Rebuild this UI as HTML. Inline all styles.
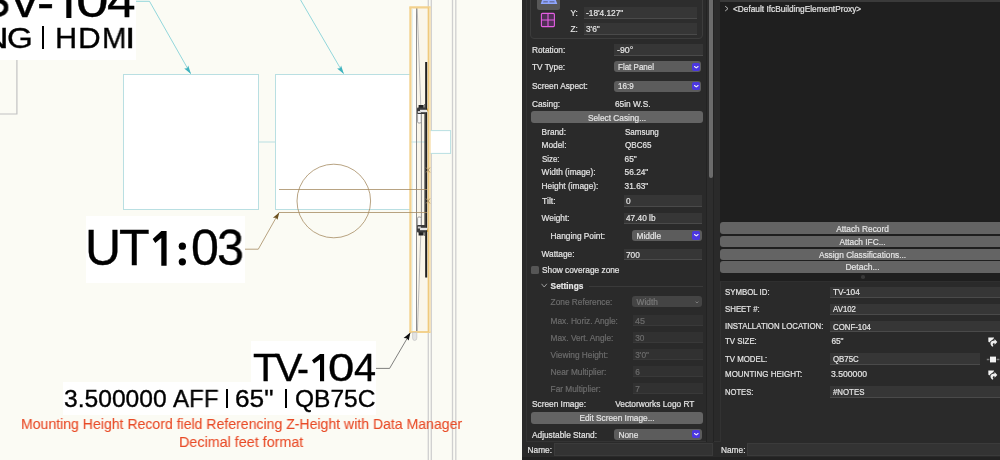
<!DOCTYPE html>
<html>
<head>
<meta charset="utf-8">
<title>TV-104</title>
<style>
html,body{margin:0;padding:0;}
body{width:1000px;height:460px;overflow:hidden;background:#fbfbf4;font-family:"Liberation Sans",sans-serif;}
#root{position:relative;width:1000px;height:460px;overflow:hidden;background:#fbfbf4;}
.abs{position:absolute;}
/* ---------- canvas ---------- */
#canvas{position:absolute;left:0;top:0;width:522px;height:460px;background:#fbfbf4;overflow:hidden;}
.wbox{position:absolute;background:#fff;}
.ctext{position:absolute;will-change:transform;color:#000;-webkit-text-stroke:0.35px #000;white-space:nowrap;line-height:1;transform-origin:0 0;}
.red{position:absolute;will-change:transform;-webkit-text-stroke:0.1px #e84a26;color:#e84a26;white-space:nowrap;line-height:1;font-size:11.2px;transform-origin:0 0;}
/* ---------- panel ---------- */
#panel{will-change:transform;position:absolute;left:522px;top:0;width:478px;height:460px;background:#2a2a2a;overflow:hidden;color:#e4e4e4;font-size:8.3px;}
.t{position:absolute;-webkit-text-stroke:0.2px currentColor;white-space:nowrap;line-height:10px;height:10px;color:#e4e4e4;font-size:8.3px;transform-origin:0 50%;}
.t.dis{color:#6c6c6c;}
.t.c{text-align:center;transform-origin:50% 50%;}
.fld{position:absolute;background:#363636;border-bottom:1px solid #4a4a4a;box-sizing:border-box;}
.fld.d{background:#313131;border-bottom-color:#393939;}
.btn{position:absolute;background:#646464;border-radius:3px;text-align:center;}
.dd{position:absolute;background:#5c5c5c;border-radius:3px;}
.dd.d{background:#444;}
.bb{position:absolute;background:#4b37e0;border-radius:2px;width:8.6px;height:8.2px;}
.bb svg{position:absolute;left:0;top:0;}
</style>
</head>
<body>
<div id="root">
<div id="canvas">
  <!-- white boxes -->
  <div class="wbox" style="left:0;top:0;width:136px;height:59.6px;"></div>
  <div class="wbox" style="left:86.1px;top:215.7px;width:158.7px;height:67px;"></div>
  <div class="wbox" style="left:251.4px;top:341px;width:125px;height:42px;"></div>
  <div class="wbox" style="left:63.2px;top:381.8px;width:313.2px;height:33.1px;"></div>

  <svg class="abs" style="left:0;top:0" width="522" height="460" viewBox="0 0 522 460">
    <!-- gray vertical line far left -->
    <path d="M16.9 60 V114 H0" fill="none" stroke="#c2c2c2" stroke-width="1.2"/>
    <!-- wall lines -->
    <g stroke="#cfcfcf" stroke-width="1.3" fill="none">
      <path d="M428.3 0 V8"/>
      <path d="M431.3 0 V460"/>
      <path d="M428.3 332 V460"/>
      <path d="M452.5 0 V460"/>
      <path d="M455.8 0 V460"/>
    </g>
    <!-- two big rectangles -->
    <g fill="#ffffff" stroke="#b9dfe2" stroke-width="1">
      <rect x="123.5" y="74.5" width="135" height="135"/>
      <rect x="275.5" y="74.5" width="135.6" height="135"/>
    </g>
    <path d="M259 142 H275" stroke="#b9dfe2" stroke-width="1" fill="none"/>
    <!-- cyan leaders -->
    <g stroke="#77cdd4" stroke-width="0.8" fill="none">
      <path d="M136 1.3 H149.5 L190.5 73.5"/>
      <path d="M300.6 0 L343.4 73.5"/>
    </g>
    <g fill="#3fb3bf">
      <path d="M191 74 L184.2 68.6 L187.2 68.2 L188.2 65.4 Z"/>
      <path d="M343.9 74 L337.1 68.6 L340.1 68.2 L341.1 65.4 Z"/>
    </g>
    <!-- TV body -->
    <rect x="411" y="8" width="18" height="324" fill="#faf6ea"/>
    <rect x="411.5" y="8" width="5" height="324" fill="#fffefa"/>
    <!-- small white rect on wall -->
    <rect x="428.6" y="130.6" width="22" height="22.8" fill="#ffffff" stroke="#b9dfe2" stroke-width="1"/>
    <path d="M411 142 H426" stroke="#bfe3e6" stroke-width="1"/>
    <!-- gray inner lines -->
    <g stroke="#8c8c8c" stroke-width="1" fill="none">
      <path d="M416.5 8 V332"/>
      <path d="M421.4 106 V234"/>
    </g>
    <g stroke="#b4b4b4" stroke-width="0.9" fill="none">
      <path d="M417.2 8 L420.8 106"/>
      <path d="M420.8 234 L417.4 332"/>
    </g>
    <path d="M412.3 9 V331" stroke="#cfe9ea" stroke-width="0.7" fill="none"/>
    <!-- black mount bar -->
    <path d="M426.1 62 V277.5" stroke="#161616" stroke-width="1.8" fill="none"/>
    <path d="M427.2 62 V277.5" stroke="#6a6a6a" stroke-width="0.5" fill="none"/>
    <path d="M424.6 104 V236" stroke="#555" stroke-width="0.8" fill="none"/>
    <!-- brackets -->
    <g>
      <rect x="417.6" y="113" width="3.6" height="10" rx="1.2" fill="#fdfdfd" stroke="#888" stroke-width="0.8"/>
      <rect x="418.6" y="105" width="5" height="4" fill="#222"/>
      <rect x="417" y="107.5" width="9" height="6.5" rx="1" fill="#3a3a3a"/>
      <rect x="420" y="109.8" width="7" height="2.4" fill="#e8e8e8"/>
      <rect x="417.8" y="111" width="3" height="2" fill="#cfcfcf"/>
      <rect x="427" y="108.5" width="2" height="2.4" fill="#b98a2c"/>
      <rect x="417.6" y="217" width="3.6" height="10" rx="1.2" fill="#fdfdfd" stroke="#888" stroke-width="0.8"/>
      <rect x="418.6" y="231.5" width="5" height="4" fill="#222"/>
      <rect x="417" y="225" width="9" height="7.5" rx="1" fill="#3a3a3a"/>
      <rect x="420" y="227.8" width="7" height="2.4" fill="#e8e8e8"/>
      <rect x="417.8" y="226.5" width="3" height="2" fill="#cfcfcf"/>
      <rect x="427" y="229.5" width="2" height="2.4" fill="#b98a2c"/>
    </g>
    <!-- orange selection outline -->
    <path d="M409.3 7.4 H430.6 M409.3 332 H430.6" stroke="#f3d28e" stroke-width="2.2" fill="none"/>
    <path d="M410.4 7.4 V332" stroke="#f3d28e" stroke-width="2.2" fill="none"/>
    <path d="M428.4 7.4 V332" stroke="#efc97c" stroke-width="1.5" fill="none"/>
    <path d="M429.9 7.4 V332" stroke="#f7dfac" stroke-width="1.6" fill="none"/>
    <!-- bottom stub -->
    <path d="M412.6 332.5 V338 Q412.6 340.5 414.6 340.5 Q416.8 340.5 416.8 338 V332.5 Z" fill="#e4e4e4" stroke="#bdbdbd" stroke-width="0.6"/>
    <!-- brown circle & lines -->
    <g stroke="#a68c62" stroke-width="0.8" fill="none">
      <circle cx="333.8" cy="201" r="36.8"/>
      <path d="M279 189.5 H427"/>
      <path d="M245 249.2 H258.3 L279 212.5 H427"/>
      <path d="M426 167.5 L430 172.5 M430 167.5 L426 172.5"/>
      <path d="M426 198.5 L430 203.5 M430 198.5 L426 203.5"/>
    </g>
    <path d="M279.3 212.6 L277.5 219.8 L275.8 217.8 L272.9 217.8 Z" fill="#6e5220"/>
    <!-- black leader to TV -->
    <path d="M376 368.4 H389.6 L410 333.5" stroke="#4a4a4a" stroke-width="0.7" fill="none"/>
    <path d="M410.4 332.6 L408.7 340.6 L406.6 338.2 L403.6 338 Z" fill="#111"/>
  </svg>

  <!-- text -->
  <!--BIG-->
  <span class="ctext g" style="left:-20.66px;top:-22.71px;font-size:47.97px;transform:scaleX(0.981)">S</span>
  <span class="ctext g" style="left:8.20px;top:-22.71px;font-size:47.97px;transform:scaleX(1.052)">V</span>
  <span class="ctext g" style="left:37.33px;top:-20.91px;font-size:47.97px;transform:scaleX(1.076)">-</span>
  <svg class="abs" style="left:0;top:0;overflow:visible" width="1" height="1"><polygon points="66.3,-15.7 71.4,-15.7 71.4,17.9 66.3,17.9 66.3,-9.0 59.2,-4.1 56.7,-8.0" fill="#000"/></svg>
  <span class="ctext g" style="left:76.06px;top:-22.71px;font-size:47.97px;transform:scaleX(1.221)">0</span>
  <span class="ctext g" style="left:106.67px;top:-22.71px;font-size:47.97px;transform:scaleX(1.071)">4</span>
  <span class="ctext g" style="left:-18.03px;top:23.40px;font-size:30.00px;transform:scaleX(1.231)">N</span>
  <span class="ctext g" style="left:6.74px;top:23.40px;font-size:30.00px;transform:scaleX(1.106)">G</span>
  <div class="abs" style="left:41.70px;top:26.02px;width:2.80px;height:23.41px;background:#000"></div>
  <span class="ctext g" style="left:54.59px;top:23.40px;font-size:30.00px;transform:scaleX(1.022)">H</span>
  <span class="ctext g" style="left:77.52px;top:23.40px;font-size:30.00px;transform:scaleX(1.047)">D</span>
  <span class="ctext g" style="left:101.89px;top:23.40px;font-size:30.00px;transform:scaleX(0.978)">M</span>
  <span class="ctext g" style="left:125.47px;top:23.40px;font-size:30.00px;transform:scaleX(1.241)">I</span>
  <span class="ctext g" style="left:85.10px;top:223.72px;font-size:49.71px;transform:scaleX(1.006)">U</span>
  <span class="ctext g" style="left:119.20px;top:223.72px;font-size:49.71px;transform:scaleX(1.009)">T</span>
  <svg class="abs" style="left:0;top:0;overflow:visible" width="1" height="1"><polygon points="161.3,231.0 166.6,231.0 166.6,265.8 161.3,265.8 161.3,238.0 155.3,243.0 152.7,239.0" fill="#000"/></svg>
  <svg class="abs" style="left:0;top:0;overflow:visible" width="1" height="1"><circle cx="182.35" cy="246.21" r="3.65" fill="#000"/><circle cx="182.35" cy="261.83" r="3.65" fill="#000"/></svg>
  <span class="ctext g" style="left:191.29px;top:223.72px;font-size:49.71px;transform:scaleX(1.010)">0</span>
  <span class="ctext g" style="left:217.16px;top:223.72px;font-size:49.71px;transform:scaleX(0.976)">3</span>
  <span class="ctext g" style="left:252.79px;top:348.29px;font-size:39.00px;transform:scaleX(1.065)">T</span>
  <span class="ctext g" style="left:275.24px;top:348.29px;font-size:39.00px;transform:scaleX(1.052)">V</span>
  <span class="ctext g" style="left:297.33px;top:348.99px;font-size:39.00px;transform:scaleX(0.914)">-</span>
  <svg class="abs" style="left:0;top:0;overflow:visible" width="1" height="1"><polygon points="320.0,354.0 324.1,354.0 324.1,381.3 320.0,381.3 320.0,359.5 314.0,363.4 312.0,360.3" fill="#000"/></svg>
  <span class="ctext g" style="left:328.31px;top:348.29px;font-size:39.00px;transform:scaleX(1.212)">0</span>
  <span class="ctext g" style="left:353.73px;top:348.29px;font-size:39.00px;transform:scaleX(1.018)">4</span>
  <span class="ctext g" style="left:63.96px;top:386.92px;font-size:24.43px;transform:scaleX(1.008)">3.500000</span>
  <span class="ctext g" style="left:172.55px;top:386.92px;font-size:24.43px;transform:scaleX(0.987)">AFF</span>
  <div class="abs" style="left:225.50px;top:389.05px;width:2.80px;height:19.07px;background:#000"></div>
  <span class="ctext g" style="left:235.39px;top:386.92px;font-size:24.43px;transform:scaleX(1.073)">65&quot;</span>
  <div class="abs" style="left:284.60px;top:389.05px;width:2.80px;height:19.07px;background:#000"></div>
  <span class="ctext g" style="left:295.12px;top:386.92px;font-size:24.43px;transform:scaleX(1.004)">QB75C</span>
  <!--/BIG-->
  <div class="red" id="r1" style="left:21px;top:415.8px;font-size:15px;transform:scaleX(0.938);">Mounting Height Record field Referencing Z-Height with Data Manager</div>
  <div class="red" id="r2" style="left:179.2px;top:433.5px;font-size:15px;transform:scaleX(0.956);">Decimal feet format</div>
</div>

<div id="panel">
  <!-- frames / backgrounds (page coords = panel coords + 522) -->
  <div class="abs" style="left:198px;top:0;width:280px;height:281px;background:#1f1f1f;"></div>
  <div class="abs" style="left:0;top:457.4px;width:478px;height:2.6px;background:#222;"></div>
  <div class="abs" style="left:4.1px;top:0;width:193.9px;height:441.9px;border-left:1px solid #333;border-bottom:1px solid #343434;box-sizing:border-box;"></div>
  <div class="abs" style="left:184.3px;top:0;width:8px;height:441.5px;background:#2d2d2d;border-left:1px solid #232323;border-right:1px solid #232323;box-sizing:border-box;"></div>
  
  <!-- scrollbar thumb -->
  <div class="abs" style="left:187px;top:-6px;width:4px;height:184px;background:#6b6b6b;border-radius:2px;"></div>

  <!-- group box -->
  <div class="abs" style="left:8px;top:-8px;width:172.6px;height:47px;border:1px solid #3c3c3c;border-radius:4px;background:#2d2d2d;box-sizing:border-box;"></div>
  <div class="abs" style="left:15px;top:-4px;width:22.6px;height:13.8px;background:#575757;border-radius:2.5px;"></div>
  <svg class="abs" style="left:18px;top:0" width="18" height="6" viewBox="0 0 18 6">
    <path d="M2.4 -1 H15.4 L17.3 3.9 H0.7 Z" fill="#8fa6ff"/>
    <path d="M3.5 1 H7.8 V2.6 H3 Z M9.5 1 H14.3 L14.8 2.6 H9.5 Z" fill="#6a74a8"/>
  </svg>
  <svg class="abs" style="left:18px;top:12px" width="16" height="16" viewBox="0 0 16 16">
    <rect x="1.4" y="1.4" width="13" height="13.2" rx="1" fill="#4f2f55" stroke="#e45ee2" stroke-width="1.1"/>
    <path d="M8 1.4 V14.6 M1.4 8 H14.4" stroke="#e45ee2" stroke-width="1.1"/>
  </svg>
  <div class="t" style="left:48.5px;top:7.6px;">Y:</div>
  <div class="fld" style="left:61.7px;top:7.1px;width:113.7px;height:11.6px;"></div>
  <div class="t" style="left:64px;top:7.7px;">-18'4.127"</div>
  <div class="t" style="left:48.5px;top:24.1px;">Z:</div>
  <div class="fld" style="left:61.7px;top:23.3px;width:113.7px;height:11.6px;"></div>
  <div class="t" style="left:64px;top:24.1px;">3'6"</div>

  <div class="t" style="left:10px;top:44.7px;">Rotation:</div>
  <div class="fld" style="left:92px;top:44px;width:88.6px;height:11.5px;"></div>
  <div class="t" style="left:95px;top:44.9px;transform:scaleX(1.06);">-90°</div>

  <div class="t" style="left:10px;top:62px;">TV Type:</div>
  <div class="dd" style="left:92px;top:61.4px;width:87.4px;height:10.8px;"></div>
  <div class="bb" style="left:169.8px;top:62.8px;"><svg width="8.6" height="8.2" viewBox="0 0 8.6 8.2"><path d="M2.5 3.5 L4.3 4.9 L6.1 3.5" fill="none" stroke="#f6f6f6" stroke-width="1.05" stroke-linecap="round" stroke-linejoin="round"/></svg></div>
  <div class="t" style="left:95.6px;top:62px;transform:scaleX(0.965);">Flat Panel</div>

  <div class="t" style="left:10px;top:81.1px;">Screen Aspect:</div>
  <div class="dd" style="left:92px;top:80.5px;width:87.4px;height:11px;"></div>
  <div class="bb" style="left:169.8px;top:82px;"><svg width="8.6" height="8.2" viewBox="0 0 8.6 8.2"><path d="M2.5 3.5 L4.3 4.9 L6.1 3.5" fill="none" stroke="#f6f6f6" stroke-width="1.05" stroke-linecap="round" stroke-linejoin="round"/></svg></div>
  <div class="t" style="left:95.6px;top:81.1px;transform:scaleX(0.966);">16:9</div>

  <div class="t" style="left:10px;top:98.6px;">Casing:</div>
  <div class="t" style="left:93px;top:98.6px;">65in W.S.</div>
  <div class="btn" style="left:8.8px;top:111.1px;width:172.2px;height:11.8px;"></div>
  <div class="t c" style="left:9px;width:172px;top:112.8px;">Select Casing...</div>

  <div class="t" style="left:19.6px;top:127px;">Brand:</div>
  <div class="t" style="left:102.6px;top:127px;transform:scaleX(0.965);">Samsung</div>
  <div class="t" style="left:19.6px;top:140.4px;">Model:</div>
  <div class="t" style="left:102.6px;top:140.4px;transform:scaleX(0.97);">QBC65</div>
  <div class="t" style="left:19.6px;top:153.6px;transform:scaleX(0.95);">Size:</div>
  <div class="t" style="left:102.6px;top:153.6px;">65"</div>
  <div class="t" style="left:19.6px;top:167.4px;">Width (image):</div>
  <div class="t" style="left:102.6px;top:167.4px;">56.24"</div>
  <div class="t" style="left:19.6px;top:180.6px;">Height (image):</div>
  <div class="t" style="left:102.6px;top:180.6px;">31.63"</div>

  <div class="t" style="left:19.6px;top:196px;transform:scaleX(1.05);">Tilt:</div>
  <div class="fld" style="left:101.5px;top:195.4px;width:78.8px;height:11.2px;"></div>
  <div class="t" style="left:104px;top:196.2px;">0</div>
  <div class="t" style="left:19.6px;top:213.4px;">Weight:</div>
  <div class="fld" style="left:101.5px;top:212.6px;width:78.8px;height:11.2px;"></div>
  <div class="t" style="left:104px;top:213.4px;">47.40 lb</div>

  <div class="t" style="left:28.6px;top:230.6px;">Hanging Point:</div>
  <div class="dd" style="left:110.1px;top:229.7px;width:69.7px;height:11.1px;"></div>
  <div class="bb" style="left:169.8px;top:231.4px;"><svg width="8.6" height="8.2" viewBox="0 0 8.6 8.2"><path d="M2.5 3.5 L4.3 4.9 L6.1 3.5" fill="none" stroke="#f6f6f6" stroke-width="1.05" stroke-linecap="round" stroke-linejoin="round"/></svg></div>
  <div class="t" style="left:114.6px;top:230.6px;">Middle</div>

  <div class="t" style="left:19.6px;top:249.4px;">Wattage:</div>
  <div class="fld" style="left:101.5px;top:249px;width:78.8px;height:11.2px;"></div>
  <div class="t" style="left:104px;top:249.6px;">700</div>

  <div class="abs" style="left:9px;top:266.1px;width:8px;height:8px;background:#565656;border-radius:1.6px;"></div>
  <div class="t" style="left:20px;top:265.4px;">Show coverage zone</div>

  <svg class="abs" style="left:19px;top:282px" width="7" height="7" viewBox="0 0 7 7"><path d="M0.5 1.8 L3.2 5 L5.9 1.8" fill="none" stroke="#b8b8b8" stroke-width="0.8"/></svg>
  <div class="t" style="left:28.6px;top:281px;font-weight:bold;">Settings</div>
  <div class="abs" style="left:67px;top:286px;width:114px;height:1px;background:#3a3a3a;"></div>

  <div class="t dis" style="left:28.6px;top:296.8px;">Zone Reference:</div>
  <div class="dd d" style="left:110px;top:296px;width:69.6px;height:11px;"></div>
  <div class="t dis" style="left:114.6px;top:296.8px;color:#7a7a7a;">Width</div>
  <svg class="abs" style="left:171.5px;top:299.5px" width="6" height="5" viewBox="0 0 6 5"><path d="M1.6 1.6 L3 3 L4.4 1.6" fill="none" stroke="#7c7c7c" stroke-width="1"/></svg>

  <div class="t dis" style="left:28.6px;top:315.6px;">Max. Horiz. Angle:</div>
  <div class="fld d" style="left:111px;top:315px;width:69.6px;height:11.4px;"></div>
  <div class="t dis" style="left:113.2px;top:315.8px;transform:scaleX(1.08);">45</div>
  <div class="t dis" style="left:28.6px;top:332.6px;">Max. Vert. Angle:</div>
  <div class="fld d" style="left:111px;top:332px;width:69.6px;height:11.4px;"></div>
  <div class="t dis" style="left:113.2px;top:332.8px;">30</div>
  <div class="t dis" style="left:28.6px;top:349.6px;">Viewing Height:</div>
  <div class="fld d" style="left:111px;top:349px;width:69.6px;height:11.4px;"></div>
  <div class="t dis" style="left:113.2px;top:349.8px;">3'0"</div>
  <div class="t dis" style="left:28.6px;top:366.5px;">Near Multiplier:</div>
  <div class="fld d" style="left:111px;top:366px;width:69.6px;height:11.4px;"></div>
  <div class="t dis" style="left:113.2px;top:366.8px;">6</div>
  <div class="t dis" style="left:28.6px;top:383.7px;">Far Multiplier:</div>
  <div class="fld d" style="left:111px;top:382.8px;width:69.6px;height:11.4px;"></div>
  <div class="t dis" style="left:113.2px;top:383.8px;">7</div>

  <div class="t" style="left:10px;top:399px;">Screen Image:</div>
  <div class="t" style="left:93.2px;top:399px;">Vectorworks Logo RT</div>
  <div class="btn" style="left:8.8px;top:412px;width:172.2px;height:11.7px;"></div>
  <div class="t c" style="left:9px;width:172px;top:413px;">Edit Screen Image...</div>

  <div class="t" style="left:10px;top:429.6px;">Adjustable Stand:</div>
  <div class="dd" style="left:92px;top:429px;width:87.6px;height:10.8px;"></div>
  <div class="bb" style="left:169.8px;top:430.3px;"><svg width="8.6" height="8.2" viewBox="0 0 8.6 8.2"><path d="M2.5 3.5 L4.3 4.9 L6.1 3.5" fill="none" stroke="#f6f6f6" stroke-width="1.05" stroke-linecap="round" stroke-linejoin="round"/></svg></div>
  <div class="t" style="left:96.5px;top:429.6px;">None</div>

  <div class="t" style="left:5.6px;top:444.8px;">Name:</div>
  <div class="fld d" style="left:32px;top:443.1px;width:158.8px;height:12.7px;background:#333;border:1px solid #3b3b3b;"></div>

  <!-- ============ right column ============ -->
  <div class="abs" style="left:198px;top:0;width:280px;height:1.6px;background:#3a3a3a;"></div>
  <svg class="abs" style="left:201.7px;top:5.4px" width="6" height="8" viewBox="0 0 6 8"><path d="M1.2 1.2 L4 3.6 L1.2 6" fill="none" stroke="#c8c8c8" stroke-width="0.9"/></svg>
  <div class="t" style="left:211px;top:4.2px;">&lt;Default IfcBuildingElementProxy&gt;</div>

  <div class="btn" style="left:198px;top:222.4px;width:285px;height:11.6px;"></div>
  <div class="t c" style="left:198px;width:285px;top:223.9px;">Attach Record</div>
  <div class="btn" style="left:198px;top:235.5px;width:285px;height:11.5px;"></div>
  <div class="t c" style="left:198px;width:285px;top:236.7px;">Attach IFC...</div>
  <div class="btn" style="left:198px;top:248.5px;width:285px;height:11.5px;"></div>
  <div class="t c" style="left:198px;width:285px;top:249.6px;">Assign Classifications...</div>
  <div class="btn" style="left:198px;top:261.4px;width:285px;height:11.2px;"></div>
  <div class="t c" style="left:198px;width:285px;top:262.4px;transform:scaleX(1.03);">Detach...</div>
  <div class="abs" style="left:339px;top:275.3px;width:3.6px;height:3.6px;border-radius:50%;background:#383838;"></div>

  <div class="abs" style="left:197.6px;top:281px;width:281px;height:160.5px;background:#2a2a2a;border-top:1px solid #2f2f2f;border-left:1px solid #323232;box-sizing:border-box;"></div>

  <div class="t" style="left:203.4px;top:287.2px;transform:scaleX(0.945);">SYMBOL ID:</div>
  <div class="fld" style="left:308px;top:286.5px;width:172px;height:11.2px;"></div>
  <div class="t" style="left:311px;top:287.4px;">TV-104</div>
  <div class="t" style="left:203.4px;top:304.3px;transform:scaleX(0.945);">SHEET #:</div>
  <div class="fld" style="left:308px;top:303.5px;width:172px;height:11.2px;"></div>
  <div class="t" style="left:311px;top:304.4px;transform:scaleX(0.945);">AV102</div>
  <div class="t" style="left:203.4px;top:321.3px;transform:scaleX(0.945);">INSTALLATION LOCATION:</div>
  <div class="fld" style="left:308px;top:320.5px;width:172px;height:11.2px;"></div>
  <div class="t" style="left:311px;top:321.5px;transform:scaleX(0.945);">CONF-104</div>
  <div class="t" style="left:203.4px;top:336.3px;transform:scaleX(0.945);">TV SIZE:</div>
  <div class="t" style="left:309.4px;top:336.3px;">65"</div>
  <div class="t" style="left:203.4px;top:354px;transform:scaleX(0.945);">TV MODEL:</div>
  <div class="fld" style="left:308px;top:353.3px;width:150px;height:11.4px;"></div>
  <div class="t" style="left:311px;top:354.3px;transform:scaleX(0.945);">QB75C</div>
  <div class="t" style="left:203.4px;top:368.9px;transform:scaleX(0.962);">MOUNTING HEIGHT:</div>
  <div class="t" style="left:309.4px;top:368.9px;transform:scaleX(1.04);">3.500000</div>
  <div class="t" style="left:203.4px;top:386.8px;transform:scaleX(0.92);">NOTES:</div>
  <div class="fld" style="left:308px;top:386.3px;width:172px;height:11.4px;"></div>
  <div class="t" style="left:311px;top:387px;transform:scaleX(0.945);">#NOTES</div>

  <!-- icons right edge -->
  <svg class="abs" style="left:465px;top:336px" width="13" height="12" viewBox="0 0 13 12" id="ic1">
    <path d="M1.3 1.6 L7.1 1.6 L6.4 3.1 L3.7 4.9 L2.4 6.4 L1.4 5.8 Z" fill="#f4f4f4"/>
    <path d="M7.6 3.1 L10.3 6.1 L7.6 8.7 L7.6 7.4 C6.6 7 5.8 7.6 5.7 8.4 L6.4 10.1 L5.4 10.8 C3.8 9.6 3.2 8 3.6 6.6 C4.2 5.2 5.8 4.4 7.6 4.5 Z" fill="#ededed"/>
  </svg>
  <svg class="abs" style="left:464px;top:353.5px" width="14" height="11" viewBox="0 0 14 11">
    <path d="M0.8 5.5 H3.4 M10.6 5.5 H13.4" stroke="#808080" stroke-width="1.7"/>
    <rect x="4" y="2.6" width="6" height="5.8" fill="#f2f2f2"/>
  </svg>
  <svg class="abs" style="left:465px;top:368.8px" width="13" height="12" viewBox="0 0 13 12">
    <path d="M1.3 1.6 L7.1 1.6 L6.4 3.1 L3.7 4.9 L2.4 6.4 L1.4 5.8 Z" fill="#f4f4f4"/>
    <path d="M7.6 3.1 L10.3 6.1 L7.6 8.7 L7.6 7.4 C6.6 7 5.8 7.6 5.7 8.4 L6.4 10.1 L5.4 10.8 C3.8 9.6 3.2 8 3.6 6.6 C4.2 5.2 5.8 4.4 7.6 4.5 Z" fill="#ededed"/>
  </svg>

  <div class="t" style="left:199px;top:444.8px;">Name:</div>
  <div class="fld d" style="left:225.2px;top:443.1px;width:256px;height:12.7px;background:#333;border:1px solid #3b3b3b;"></div>
</div>
</div>
</body>
</html>
